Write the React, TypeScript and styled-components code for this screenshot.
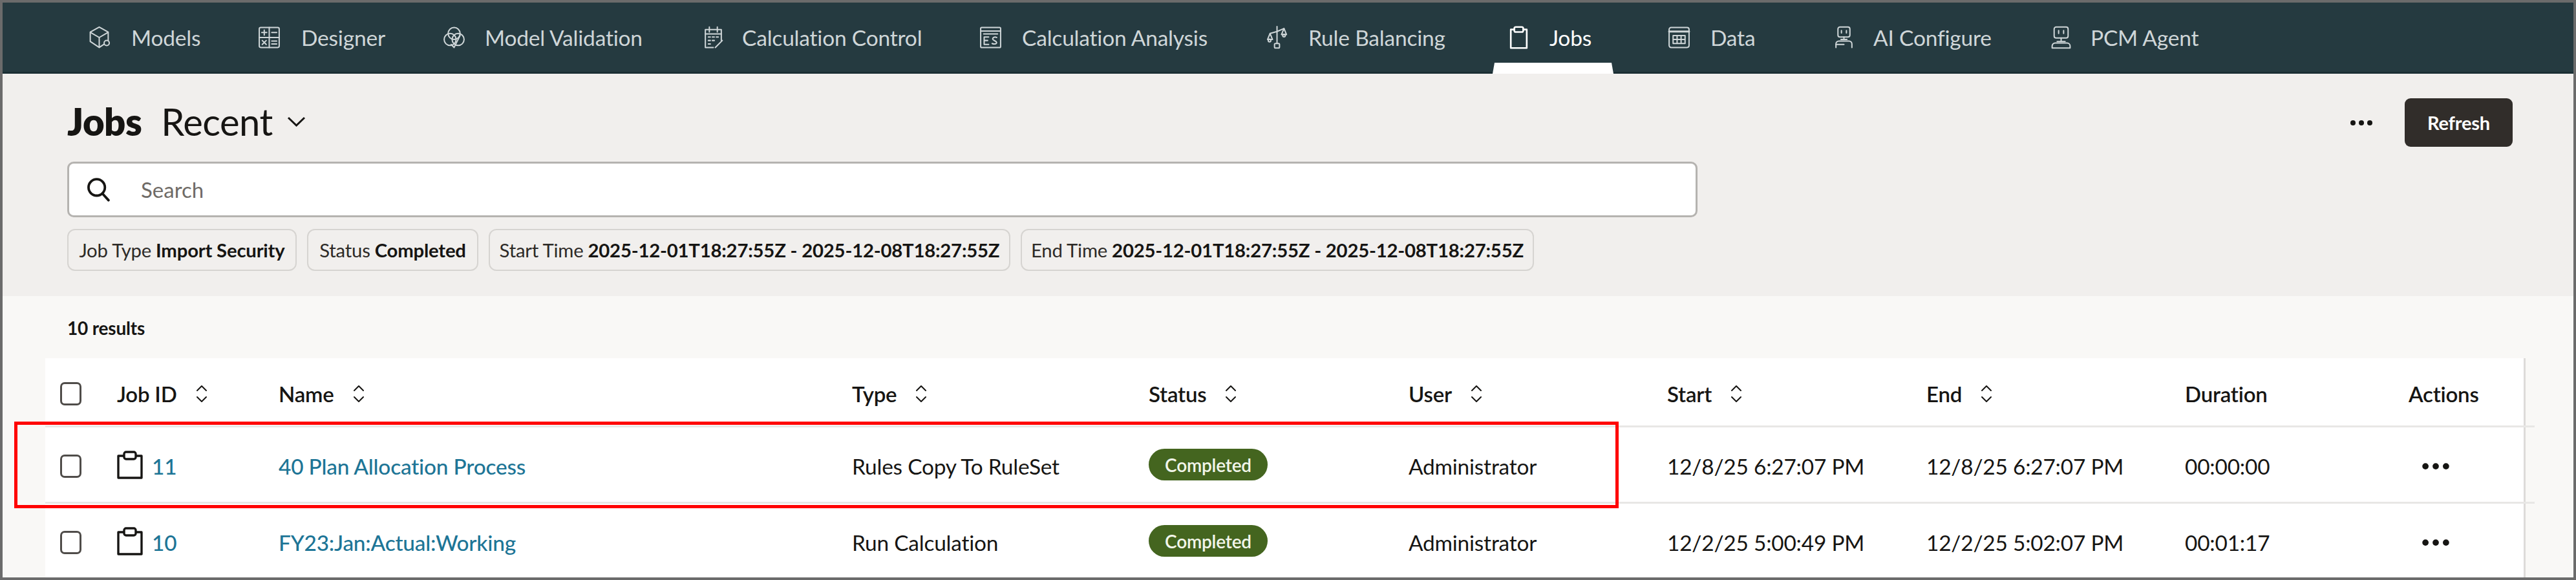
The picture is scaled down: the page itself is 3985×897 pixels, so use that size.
import React from "react";
import styled, { createGlobalStyle } from "styled-components";

const GlobalStyle = createGlobalStyle`
  html, body {
    margin: 0;
    padding: 0;
    background: #f1efed;
  }
  body {
    font-family: Lato, "Noto Sans", sans-serif;
    color: #161513;
  }
`;

const Frame = styled.div`
  width: 3985px;
  height: 897px;
  box-sizing: border-box;
  border: 4px solid #6b6b6b;
  overflow: hidden;
  display: flex;
  flex-direction: column;
  position: relative;
`;

const Nav = styled.nav`
  height: 110px;
  flex: none;
  box-sizing: border-box;
  background: #253a40;
  border-bottom: 3px solid #1b2f34;
  padding-left: 131px;
  padding-top: 35px;
  display: flex;
  align-items: flex-start;
`;

const Tab = styled.a<{ $width: number; $gap: number; $active?: boolean }>`
  position: relative;
  width: ${(p) => p.$width}px;
  height: 38px;
  display: flex;
  align-items: center;
  gap: ${(p) => p.$gap}px;
  flex: none;
  font-size: 33.5px;
  letter-spacing: -0.2px;
  white-space: nowrap;
  color: ${(p) => (p.$active ? "#ffffff" : "#cfd6d8")};

  ${(p) =>
    p.$active &&
    `
    &::after {
      content: "";
      position: absolute;
      left: -22px;
      top: 58px;
      width: 187px;
      height: 17px;
      background: #fff;
      clip-path: polygon(3px 0, 184px 0, 187px 100%, 0 100%);
    }
  `}
`;

const NavIcon = styled.svg`
  width: 37px;
  height: 38px;
  flex: none;
  fill: none;
  stroke: currentColor;
  stroke-width: 1.3;
  stroke-linejoin: round;
  stroke-linecap: round;
`;

const Header = styled.header`
  height: 344px;
  flex: none;
  box-sizing: border-box;
  background: #f1efed;
  padding: 38px 94px 0 100px;
`;

const TitleRow = styled.div`
  height: 98px;
  display: flex;
  align-items: flex-start;
`;

const Title = styled.h1`
  margin: 0;
  font-size: 58px;
  line-height: 72px;
  font-weight: 800;
  letter-spacing: -0.5px;
`;

const Scope = styled.button`
  margin-left: 30px;
  padding: 0;
  border: 0;
  background: none;
  color: #161513;
  font: 400 58px/72px Lato, sans-serif;
  letter-spacing: -0.5px;
  display: flex;
  align-items: center;
  gap: 22px;
`;

const Toolbar = styled.div`
  margin-left: auto;
  display: flex;
  align-items: center;
  gap: 49px;
`;

const DotsIcon = styled.svg<{ $width: number }>`
  width: ${(p) => p.$width}px;
  fill: #161513;
  flex: none;
`;

const RefreshButton = styled.button`
  width: 167px;
  height: 75px;
  border: 0;
  border-radius: 9px;
  background: #312d2a;
  color: #fff;
  font: 700 29px Lato, sans-serif;
  letter-spacing: -0.2px;
`;

const SearchBox = styled.div`
  width: 2522px;
  height: 86px;
  box-sizing: border-box;
  background: #fff;
  border: 3px solid #b5b3b0;
  border-radius: 10px;
  display: flex;
  align-items: center;
  padding-left: 26px;
  gap: 47px;
  color: #6f6b67;
  font-size: 33px;
`;

const SearchGlyph = styled.svg`
  width: 38px;
  height: 38px;
  flex: none;
  fill: none;
  stroke: #161513;
  stroke-width: 2.4;
  stroke-linecap: round;
`;

const Chips = styled.div`
  display: flex;
  gap: 16px;
  margin-top: 18px;
`;

const Chip = styled.span<{ $width: number }>`
  width: ${(p) => p.$width}px;
  height: 65px;
  box-sizing: border-box;
  border: 2.5px solid #d6d4d1;
  border-radius: 12px;
  display: flex;
  align-items: center;
  justify-content: center;
  gap: 7px;
  font-size: 29.3px;
  letter-spacing: -0.2px;
  white-space: nowrap;
  color: #2d2a27;

  b {
    font-weight: 700;
    color: #161513;
  }
`;

const Results = styled.section`
  flex: 1;
  min-height: 0;
  background: #f9f8f6;
  position: relative;
`;

const ResultCount = styled.div`
  height: 96px;
  box-sizing: border-box;
  padding: 31px 0 0 100px;
  font-size: 28px;
  line-height: 36px;
  font-weight: 700;
  letter-spacing: -0.2px;
`;

const Table = styled.div`
  width: 3837px;
  height: 344px;
  margin-left: 66px;
  box-sizing: border-box;
  background: #fff;
  border-right: 3px solid #dddbd9;
`;

const columns = "88px 250px 887px 459px 402px 400px 401px 400px 346px 181px";

const Row = styled.div<{ $head?: boolean }>`
  width: 3851px;
  height: ${(p) => (p.$head ? "107px" : "118px")};
  box-sizing: border-box;
  padding: 5px 0 0 23px;
  border-bottom: 3px solid #e8e7e5;
  display: grid;
  grid-template-columns: ${columns};
  align-items: center;
  font-size: ${(p) => (p.$head ? "33px" : "33.4px")};
  letter-spacing: -0.2px;
  white-space: nowrap;
`;

const Check = styled.span`
  width: 33px;
  height: 36px;
  box-sizing: border-box;
  border: 3px solid #4f4c49;
  border-radius: 7px;
  display: block;
`;

const HeadCell = styled.div`
  display: flex;
  align-items: center;
  gap: 27px;
  font-weight: 600;
`;

const SortIcon = styled.svg`
  width: 22px;
  height: 28px;
  flex: none;
  fill: none;
  stroke: #161513;
  stroke-width: 2;
  stroke-linecap: round;
  stroke-linejoin: round;
`;

const IdCell = styled.div`
  display: flex;
  align-items: center;
  gap: 14px;
`;

const ClipIcon = styled.svg`
  width: 40px;
  height: 44px;
  flex: none;
  margin-top: -4px;
  fill: none;
  stroke: #161513;
  stroke-width: 3.4;
  stroke-linejoin: round;
`;

const JobLink = styled.a`
  color: #1d7596;
  font-weight: 500;
`;

const Badge = styled.span`
  width: 184px;
  height: 49px;
  margin-top: -5px;
  box-sizing: border-box;
  border-radius: 25px;
  background: #44651f;
  color: #f2f6ea;
  display: flex;
  align-items: center;
  justify-content: center;
  font-size: 28px;
  font-weight: 600;
  letter-spacing: -0.2px;
`;

const Actions = styled.div`
  padding-left: 20px;
  display: flex;
`;

const Highlight = styled.div`
  position: absolute;
  left: 18px;
  top: 194px;
  width: 2482px;
  height: 134px;
  box-sizing: border-box;
  border: 5px solid #ff0000;
  pointer-events: none;
`;

const Dots = ({ width }: { width: number }) => (
  <DotsIcon $width={width} viewBox="0 0 36 10">
    <circle cx="5" cy="5" r="4" />
    <circle cx="18" cy="5" r="4" />
    <circle cx="31" cy="5" r="4" />
  </DotsIcon>
);

const Sort = () => (
  <SortIcon viewBox="0 0 22 28">
    <path d="M4 9 11 2l7 7M4 19l7 7 7-7" />
  </SortIcon>
);

const navTabs = [
  {
    label: "Models",
    width: 263,
    gap: 31,
    icon: (
      <>
        <path d="M12 1.5 21 6.5v9.5L12 22 3 16V6.5Z" />
        <path d="M3.5 7 12 12l8.5-5M12 12v9.5" />
        <circle cx="19.5" cy="17.5" r="2.6" fill="#253a40" />
      </>
    ),
  },
  {
    label: "Designer",
    width: 286,
    gap: 31,
    icon: (
      <>
        <rect x="2" y="2" width="20" height="20" rx="1.5" />
        <path d="M12 2v20M2 12h20" />
        <path d="M7 4.5v5M4.500 7h5M14.500 7h5M5 15l4 4M9 15l-4 4M14.500 15.500h5M14.500 18.500h5" />
      </>
    ),
  },
  {
    label: "Model Validation",
    width: 401,
    gap: 29,
    icon: (
      <>
        <circle cx="12" cy="8" r="6" />
        <circle cx="8" cy="14" r="6" />
        <circle cx="16" cy="14" r="6" />
        <path d="m9 19 3 3 6-12" />
      </>
    ),
  },
  {
    label: "Calculation Control",
    width: 429,
    gap: 26,
    icon: (
      <>
        <path d="M12 22H4V4h16v11" />
        <path d="M8 1.500v5M16 1.500v5M4 8.500h16" />
        <path d="M7 11.500h2M11 11.500h2M15 11.500h2M7 15h2M11 15h2M7 18.500h2" />
        <path d="m14 22 7-7" />
      </>
    ),
  },
  {
    label: "Calculation Analysis",
    width: 443,
    gap: 30,
    icon: (
      <>
        <rect x="2" y="2" width="20" height="20" rx="1" />
        <path d="M2 5.500h20M5 8.500h14" />
        <path d="M10 11.500H5.500v7.500H10M5.500 15H9M18 12c-2-1-4 0-4 1.500s4 2 4 3.500-2.500 2-4.500 1" />
      </>
    ),
  },
  {
    label: "Rule Balancing",
    width: 374,
    gap: 30,
    icon: (
      <>
        <path d="M12 1v17M5 8l7-2 7-3" />
        <path d="M5 8 2.500 14h5ZM19 3l-2.500 6h5Z" />
        <circle cx="4.500" cy="15" r="1.300" />
        <circle cx="19" cy="10" r="1.300" />
        <rect x="9.500" y="18" width="5" height="4.500" rx="1" />
      </>
    ),
  },
  {
    label: "Jobs",
    width: 248,
    gap: 29,
    active: true,
    icon: (
      <>
        <path d="M7.500 4H4v18.500h16V4h-3.500" strokeWidth="1.700" />
        <rect x="7.500" y="1.500" width="9" height="5" rx="1.500" strokeWidth="1.700" />
      </>
    ),
  },
  {
    label: "Data",
    width: 255,
    gap: 30,
    icon: (
      <>
        <rect x="2" y="2" width="20" height="20" rx="2" />
        <path d="M2 6h20" strokeWidth="2" />
        <path d="M6 10h12v8H6ZM6 14h12M10 10v8M14 10v8" />
      </>
    ),
  },
  {
    label: "AI Configure",
    width: 336,
    gap: 27,
    icon: (
      <>
        <rect x="6" y="1.500" width="12" height="10" rx="2" />
        <path d="M9.500 5v2.500M14.500 5v2.500M9 14h6M12 11.500v2.500" />
        <path d="M4 22v-3.500a3 3 0 0 1 3-3h10a3 3 0 0 1 3 3V22" />
        <path d="M4 19h8" />
      </>
    ),
  },
  {
    label: "PCM Agent",
    width: 300,
    gap: 27,
    icon: (
      <>
        <rect x="5" y="1.500" width="14" height="11" rx="2" />
        <path d="M9.500 5v3M14.500 5v3M12 12.500V16M8 16h8" />
        <path d="M3 22.500v-2a3 3 0 0 1 3-3h12a3 3 0 0 1 3 3v2Z" />
      </>
    ),
  },
];

const jobRows = [
  {
    id: "11",
    name: "40 Plan Allocation Process",
    type: "Rules Copy To RuleSet",
    start: "12/8/25 6:27:07 PM",
    end: "12/8/25 6:27:07 PM",
    duration: "00:00:00",
  },
  {
    id: "10",
    name: "FY23:Jan:Actual:Working",
    type: "Run Calculation",
    start: "12/2/25 5:00:49 PM",
    end: "12/2/25 5:02:07 PM",
    duration: "00:01:17",
  },
];

const App = () => {
  return (
    <>
      <GlobalStyle />
      <Frame>
        <Nav>
          {navTabs.map((tab) => (
            <Tab key={tab.label} $width={tab.width} $gap={tab.gap} $active={tab.active}>
              <NavIcon viewBox="0 0 24 24">{tab.icon}</NavIcon>
              {tab.label}
            </Tab>
          ))}
        </Nav>

        <Header>
          <TitleRow>
            <Title>Jobs</Title>
            <Scope>
              Recent
              <svg width="29" height="16" viewBox="0 0 29 16" fill="none" stroke="#161513" strokeWidth="3">
                <path d="m2 2 12.500 12L27 2" />
              </svg>
            </Scope>
            <Toolbar>
              <Dots width={36} />
              <RefreshButton>Refresh</RefreshButton>
            </Toolbar>
          </TitleRow>

          <SearchBox>
            <SearchGlyph viewBox="0 0 24 24">
              <circle cx="10.500" cy="10" r="8" />
              <path d="m16 16 6 6.500" />
            </SearchGlyph>
            Search
          </SearchBox>

          <Chips>
            <Chip $width={355}>
              Job Type <b>Import Security</b>
            </Chip>
            <Chip $width={265}>
              Status <b>Completed</b>
            </Chip>
            <Chip $width={807}>
              Start Time <b>2025-12-01T18:27:55Z - 2025-12-08T18:27:55Z</b>
            </Chip>
            <Chip $width={794}>
              End Time <b>2025-12-01T18:27:55Z - 2025-12-08T18:27:55Z</b>
            </Chip>
          </Chips>
        </Header>

        <Results>
          <ResultCount>10 results</ResultCount>
          <Table>
            <Row $head>
              <Check />
              <HeadCell>Job ID <Sort /></HeadCell>
              <HeadCell>Name <Sort /></HeadCell>
              <HeadCell>Type <Sort /></HeadCell>
              <HeadCell>Status <Sort /></HeadCell>
              <HeadCell>User <Sort /></HeadCell>
              <HeadCell>Start <Sort /></HeadCell>
              <HeadCell>End <Sort /></HeadCell>
              <HeadCell>Duration</HeadCell>
              <HeadCell>Actions</HeadCell>
            </Row>
            {jobRows.map((job) => (
              <Row key={job.id}>
                <Check />
                <IdCell>
                  <ClipIcon viewBox="0 0 40 44">
                    <path d="M11 8H2v34h36V8h-9" />
                    <rect x="11" y="2" width="18" height="11" rx="3" />
                  </ClipIcon>
                  <JobLink>{job.id}</JobLink>
                </IdCell>
                <JobLink>{job.name}</JobLink>
                <div>{job.type}</div>
                <Badge>Completed</Badge>
                <div>Administrator</div>
                <div>{job.start}</div>
                <div>{job.end}</div>
                <div>{job.duration}</div>
                <Actions>
                  <Dots width={44} />
                </Actions>
              </Row>
            ))}
          </Table>
          <Highlight />
        </Results>
      </Frame>
    </>
  );
};

export default App;
